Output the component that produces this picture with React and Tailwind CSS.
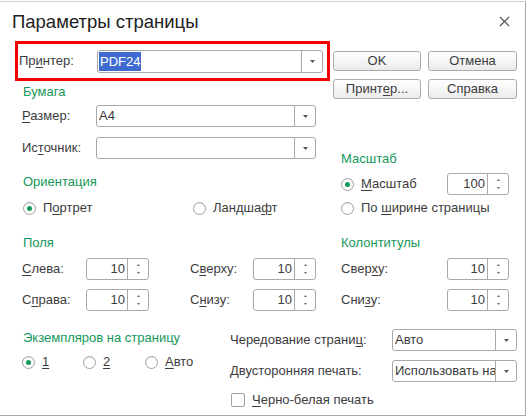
import React from "react";

const border = "border-[#a9a9a9]";

function U({ children }) {
    return <span className="underline underline-offset-2 decoration-1">{children}</span>;
}

function Heading({ children, className = "" }) {
    return <div className={`flex items-center text-[#16985a] ${className}`}>{children}</div>;
}

function DropArrow() {
    return (
        <svg width="5" height="3" viewBox="0 0 5 3">
            <path d="M0 0H5L2.5 3Z" fill="#555" />
        </svg>
    );
}

function Select({ w, h = "h-[22px]", value, hl }) {
    return (
        <div className={`flex ${w} ${h} border ${border} rounded-[3px] bg-white`}>
            <div className="flex-1 min-w-0 overflow-hidden whitespace-nowrap flex items-center pl-[1px]">
                {hl ? (
                    <span className="bg-[#3f6bd1] text-white px-[1px] leading-[19px]">{value}</span>
                ) : (
                    <span className="pl-[1px]">{value}</span>
                )}
            </div>
            <div className={`w-[21px] shrink-0 border-l ${border} flex items-center justify-center`}>
                <DropArrow />
            </div>
        </div>
    );
}

function Spin({ w, value }) {
    return (
        <div className={`flex ${w} h-[22px] border ${border} rounded-[3px] bg-white`}>
            <div className="flex-1 flex items-center justify-end pr-[2px]">{value}</div>
            <div className={`w-[21px] shrink-0 border-l ${border} flex flex-col items-center justify-center gap-[6px]`}>
                <svg width="3" height="2" viewBox="0 0 3 2">
                    <path d="M0 2H3L1.5 0Z" fill="#666" />
                </svg>
                <svg width="3" height="2" viewBox="0 0 3 2">
                    <path d="M0 0H3L1.5 2Z" fill="#666" />
                </svg>
            </div>
        </div>
    );
}

function Radio({ checked, children, className = "" }) {
    return (
        <div className={`flex items-center gap-[7px] ${className}`}>
            <span className="w-[13px] h-[13px] rounded-full border border-[#a0a0a0] bg-white flex items-center justify-center shrink-0 shadow-[inset_0_1px_1px_rgba(0,0,0,0.08)]">
                {checked && <span className="w-[5px] h-[5px] rounded-full bg-[#16985a]" />}
            </span>
            <span>{children}</span>
        </div>
    );
}

function Btn({ w, children }) {
    return (
        <div className={`${w} h-[20px] flex items-center justify-center border border-[#ababab] rounded-[3px] bg-linear-to-b from-white to-[#ebebeb]`}>
            {children}
        </div>
    );
}

export default function App() {
    return (
        <div className="w-[528px] h-[418px] bg-white text-[13px] leading-[16px] text-[#3c3c3c] [font-family:'Liberation_Sans',Arial,sans-serif]">
            <div className="mt-px w-[526px] h-[415px] border-t border-r border-b border-t-[#cfcfcf] border-r-[#a8a8a8] border-b-[#a8a8a8]">
                {/* title */}
                <div className="h-[39px] flex items-center justify-between pl-[12px] pr-[15px]">
                    <div className="text-[18.5px] leading-[22px] text-[#222]">Параметры страницы</div>
                    <svg width="11" height="11" viewBox="0 0 11 11">
                        <path d="M1 1L10 10M10 1L1 10" stroke="#555" strokeWidth="1.2" />
                    </svg>
                </div>

                {/* top block */}
                <div className="flex">
                    <div className="w-[330px]">
                        <div className="ml-[15px] w-[315px] h-[40px] border-[3px] border-[#f50000] flex items-center">
                            <div className="w-[79px] pl-[1px]">Пр<U>и</U>нтер:</div>
                            <Select w="w-[226px]" h="h-[23px]" value="PDF24" hl />
                        </div>
                        <Heading className="h-[22px] pl-[23px]">Бумага</Heading>
                        <div className="mt-[2px] h-[22px] flex items-center pl-[22px]">
                            <div className="w-[74px]"><U>Р</U>азмер:</div>
                            <Select w="w-[220px]" value="A4" />
                        </div>
                        <div className="mt-[10px] h-[22px] flex items-center pl-[22px]">
                            <div className="w-[74px]">Ис<U>т</U>очник:</div>
                            <Select w="w-[220px]" value="" />
                        </div>
                        <Heading className="mt-[12px] h-[22px] pl-[23px]">Ориентация</Heading>
                        <div className="mt-[4px] h-[22px] flex items-center pl-[23px]">
                            <Radio checked className="w-[170px]">П<U>о</U>ртрет</Radio>
                            <Radio>Ландша<U>ф</U>т</Radio>
                        </div>
                    </div>
                    <div className="flex-1">
                        <div className="pt-[10px] pl-[3px]">
                            <div className="flex gap-[7px]">
                                <Btn w="w-[88px]">OK</Btn>
                                <Btn w="w-[89px]">Отмена</Btn>
                            </div>
                            <div className="mt-[8px] flex gap-[7px]">
                                <Btn w="w-[88px]">Принт<U>е</U>р...</Btn>
                                <Btn w="w-[89px]">Справка</Btn>
                            </div>
                        </div>
                        <Heading className="mt-[52px] h-[16px] pl-[11px]">Масштаб</Heading>
                        <div className="mt-[6px] h-[22px] flex items-center pl-[11px]">
                            <Radio checked className="w-[106px]"><U>М</U>асштаб</Radio>
                            <Spin w="w-[62px]" value="100" />
                        </div>
                        <div className="mt-[2px] h-[22px] flex items-center pl-[11px]">
                            <Radio>По <U>ш</U>ирине страницы</Radio>
                        </div>
                    </div>
                </div>

                {/* margins */}
                <div className="mt-[16px] h-[16px] flex">
                    <Heading className="w-[341px] pl-[23px]">Поля</Heading>
                    <Heading>Колонтитулы</Heading>
                </div>
                <div className="mt-[7px] h-[22px] flex items-center pl-[22px]">
                    <div className="w-[64px]"><U>С</U>лева:</div>
                    <Spin w="w-[63px]" value="10" />
                    <div className="ml-[41px] w-[63px]">С<U>в</U>ерху:</div>
                    <Spin w="w-[63px]" value="10" />
                    <div className="ml-[25px] w-[106px]">Свер<U>х</U>у:</div>
                    <Spin w="w-[62px]" value="10" />
                </div>
                <div className="mt-[9px] h-[22px] flex items-center pl-[22px]">
                    <div className="w-[64px]">С<U>п</U>рава:</div>
                    <Spin w="w-[63px]" value="10" />
                    <div className="ml-[41px] w-[63px]">С<U>н</U>изу:</div>
                    <Spin w="w-[63px]" value="10" />
                    <div className="ml-[25px] w-[106px]">Сни<U>з</U>у:</div>
                    <Spin w="w-[62px]" value="10" />
                </div>

                {/* bottom */}
                <div className="flex items-start">
                    <div className="w-[230px]">
                        <Heading className="mt-[19px] h-[16px] pl-[23px]">Экземпляров на страницу</Heading>
                        <div className="mt-[8px] h-[16px] flex items-center pl-[22px]">
                            <Radio checked className="w-[61px]"><U>1</U></Radio>
                            <Radio className="w-[62px]"><U>2</U></Radio>
                            <Radio><U>А</U>вто</Radio>
                        </div>
                    </div>
                    <div className="flex-1">
                        <div className="mt-[18px] h-[22px] flex items-center">
                            <div className="w-[162px]">Чередование страни<U>ц</U>:</div>
                            <Select w="w-[125px]" value="Авто" />
                        </div>
                        <div className="mt-[9px] h-[22px] flex items-center">
                            <div className="w-[162px]">Двусторонняя печать:</div>
                            <Select w="w-[125px]" value="Использовать настройки принтера" />
                        </div>
                        <div className="mt-[11px] h-[14px] flex items-center gap-[7px] pl-px">
                            <span className="w-[14px] h-[14px] rounded-[2px] border border-[#a0a0a0] bg-white shrink-0" />
                            <span><U>Ч</U>ерно-белая печать</span>
                        </div>
                    </div>
                </div>
            </div>
        </div>
    );
}
